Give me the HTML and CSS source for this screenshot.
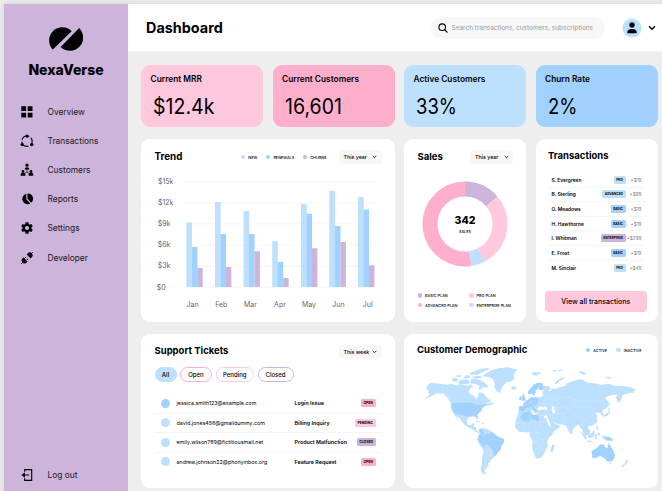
FILE: index.html
```html
<!DOCTYPE html>
<html lang="en">
<head>
<meta charset="utf-8">
<title>NexaVerse Dashboard</title>
<link rel="stylesheet" href="styles.css">
</head>
<body>
<div class="app">
  <aside class="sidebar">
    <svg class="logo" viewBox="0 0 34 24"><path d="M3.8 22.5A11.4 11.4 0 0 1 22.7 4.3Z"/><path d="M30.2 1A12 12 0 0 1 11.6 20Z"/></svg>
    <div class="brand">NexaVerse</div>
    <nav class="nav">
      <a class="nav-item"><svg class="icon" viewBox="0 0 14 14"><path d="M1.3 1.3h4.8v4.8H1.3zM7.7 1.3h4.8v4.8H7.7zM1.3 7.7h4.8v4.8H1.3zM7.7 7.7h4.8v4.8H7.7z"/></svg>Overview</a>
      <a class="nav-item"><svg class="icon" viewBox="0 0 14 14"><circle cx="7" cy="7.2" r="5.2" fill="none" stroke="#000" stroke-width="1.1" stroke-dasharray="8.9 2" stroke-dashoffset="4.5"/><circle cx="7" cy="2.1" r="1.7"/><circle cx="2.2" cy="10.6" r="1.7"/><circle cx="11.8" cy="10.6" r="1.7"/></svg>Transactions</a>
      <a class="nav-item"><svg class="icon" viewBox="0 0 14 14"><circle cx="7" cy="2.2" r="1.6"/><path d="M4.6 6.6a2.4 2.4 0 0 1 4.8 0zM.6 12.8v-1a2.3 2.3 0 0 1 4.8 0v1zM8.6 12.8v-1a2.3 2.3 0 0 1 4.8 0v1z"/><circle cx="3" cy="8.5" r="1.4"/><circle cx="11" cy="8.5" r="1.4"/><path d="M7 6v3M7 9l-2 1.4M7 9l2 1.4" stroke="#000" stroke-width=".7"/></svg>Customers</a>
      <a class="nav-item"><svg class="icon" viewBox="0 0 14 14"><path d="M6.3 1.8v5.4l4 4.3A5.3 5.3 0 1 1 6.3 1.8z"/><path d="M7.5 1.6a5.3 5.3 0 0 1 3.8 9.2L7.5 6.8z"/></svg>Reports</a>
      <a class="nav-item"><svg class="icon" viewBox="0 0 24 24"><path d="M19.6 13a8 8 0 0 0 0-2l2.3-1.8-2.3-4-2.8 1.1a8 8 0 0 0-1.8-1L14.600 2H9.400L9 5.300a8 8 0 0 0-1.800 1L4.400 5.200l-2.300 4L4.400 11a8 8 0 0 0 0 2l-2.300 1.800 2.300 4 2.800-1.100a8 8 0 0 0 1.800 1l.4 3.300h5.200l.4-3.300a8 8 0 0 0 1.800-1l2.800 1.100 2.300-4zM12 15.600a3.600 3.600 0 1 1 0-7.200 3.600 3.600 0 0 1 0 7.200z"/></svg>Settings</a>
      <a class="nav-item"><svg class="icon" viewBox="0 0 14 14"><path d="M1.300 12.700l2-2M10.700 3.300l2-2" stroke="#000" stroke-width="1"/><path d="M3.400 6.300l4.300 4.300-1 1a2.700 2.700 0 0 1-4-.2 2.700 2.700 0 0 1-.3-4zM6.700 3.500l1.200-1.200a2.700 2.700 0 0 1 4 .1 2.700 2.700 0 0 1-.1 3.700l-1.200 1.300z"/><path d="M4.600 7.500l1.600-1.600M6.500 9.400l1.600-1.600" stroke="#000" stroke-width="1"/></svg>Developer</a>
    </nav>
    <a class="nav-item logout"><svg class="icon" viewBox="0 0 14 14"><path d="M4.700 3.800V1.600h7v10.800h-7v-2.200" fill="none" stroke="#000" stroke-width="1.100"/><path d="M9.300 6.400v1.200H4.900v2.100L1.400 7l3.500-2.700v2.100z"/></svg>Log out</a>
  </aside>

  <div class="page">
    <header class="header">
      <h1>Dashboard</h1>
      <div class="search"><svg viewBox="0 0 10 10"><circle cx="4.200" cy="4.200" r="3.300"/><path d="M6.600 6.600l2.800 2.900"/></svg><span>Search transactions, customers, subscriptions</span></div>
      <svg class="avatar" viewBox="0 0 20 20"><circle cx="10" cy="10" r="9.600" fill="#bee0ff"/><circle cx="10" cy="7" r="2.700"/><path d="M5.300 15.300v-1.200c0-2 2-3.100 4.700-3.100s4.700 1.100 4.700 3.100v1.200z"/></svg>
      <svg class="account-chev" viewBox="0 0 8 6"><path d="M1 1.300l3 3 3-3"/></svg>
    </header>

    <main class="grid">
      <section class="kpi pink-light"><h3>Current MRR</h3><p>$12.4k</p></section>
      <section class="kpi pink"><h3>Current Customers</h3><p>16,601</p></section>
      <section class="kpi blue-light"><h3>Active Customers</h3><p class="percent">33%</p></section>
      <section class="kpi blue"><h3>Churn Rate</h3><p class="percent">2%</p></section>

      <section class="card trend">
        <div class="card-head">
          <h2>Trend</h2>
          <div class="legend"><span class="key k-light">NEW</span><span class="key k-blue">RENEWALS</span><span class="key k-purple">CHURNS</span></div>
          <div class="select">This year<svg viewBox="0 0 5 4"><path d="M.7.900l1.800 1.800L4.300.900"/></svg></div>
        </div>
        <svg class="chart" viewBox="141 169 253 145">
          <g class="gridlines"><path d="M186 181.700H375M186 202.800H375M186 223.900H375M186 245.200H375M186 266.300H375M186 287.400H375"/></g>
          <g class="axis">
            <text x="158" y="183.500">$15k</text><text x="158" y="204.700">$12k</text><text x="157.700" y="226">$9k</text><text x="157.700" y="247.200">$6k</text><text x="157.700" y="268.400">$3k</text><text x="156.700" y="289.500">$0</text>
            <g text-anchor="middle"><text x="192.500" y="307">Jan</text><text x="221.300" y="307">Feb</text><text x="250.500" y="307">Mar</text><text x="280" y="307">Apr</text><text x="309" y="307">May</text><text x="338.500" y="307">Jun</text><text x="367.700" y="307">Jul</text></g>
          </g>
          <path fill="#bee0ff" d="M186.300 222.400h5.700V287h-5.700zM215 202h5.700v85H215zM243.500 211h5.700v76h-5.700zM272.200 241.300h5.700V287h-5.700zM301 204h5.700v83H301zM329.300 191h5.700v96h-5.700zM358 197h5.700v90H358z"/>
          <path fill="#a1d1ff" d="M191.900 247h5.500v40h-5.500zM220.500 234h5.500v53h-5.500zM249 234h5.500v53H249zM277.700 262h5.500v25h-5.500zM306.500 213.700h5.500V287h-5.500zM335 226h5.500v61H335zM363.500 209.400h5.500V287h-5.500z"/>
          <path fill="#cdb4db" d="M197.300 268h5.400v19h-5.400zM226 267h5.400v20H226zM254.500 251.200h5.400V287h-5.400zM283.200 278h5.400v9h-5.400zM312 248.200h5.400V287H312zM340.500 242h5.400v45h-5.400zM369 265.300h5.400V287H369z"/>
        </svg>
      </section>

      <section class="card sales">
        <div class="card-head"><h2>Sales</h2><div class="select">This year<svg viewBox="0 0 5 4"><path d="M.7.900l1.800 1.800L4.300.900"/></svg></div></div>
        <svg class="donut" viewBox="0 0 86 86">
          <g transform="rotate(-90 43 43)" fill="none" stroke-width="15">
            <circle cx="43" cy="43" r="35" pathLength="360" stroke="#ffafcc" stroke-dasharray="189 171" stroke-dashoffset="-171"/>
            <circle cx="43" cy="43" r="35" pathLength="360" stroke="#cdb4db" stroke-dasharray="50 310"/>
            <circle cx="43" cy="43" r="35" pathLength="360" stroke="#ffc8dd" stroke-dasharray="102 258" stroke-dashoffset="-50"/>
            <circle cx="43" cy="43" r="35" pathLength="360" stroke="#bee0ff" stroke-dasharray="19 341" stroke-dashoffset="-152"/>
          </g>
          <text class="total" x="43" y="43.100" text-anchor="middle">342</text>
          <text class="unit" x="43" y="51.600" text-anchor="middle">SALES</text>
        </svg>
        <div class="plans"><span class="key k-purple">BASIC PLAN</span><span class="key k-pl">PRO PLAN</span><span class="key k-pink">ADVANCED PLAN</span><span class="key k-light">ENTERPRISE PLAN</span></div>
      </section>

      <section class="card tx">
        <h2>Transactions</h2>
        <ul>
          <li><b>S. Evergreen</b><i class="tag blue-light">PRO</i><em>+$19</em></li>
          <li><b>B. Sterling</b><i class="tag blue-light">ADVANCED</i><em>+$99</em></li>
          <li><b>O. Meadows</b><i class="tag blue">BASIC</i><em>+$19</em></li>
          <li><b>H. Hawthorne</b><i class="tag blue">BASIC</i><em>+$19</em></li>
          <li><b>I. Whitman</b><i class="tag purple">ENTERPRISE</i><em>+$299</em></li>
          <li><b>E. Frost</b><i class="tag blue">BASIC</i><em>+$19</em></li>
          <li><b>M. Sinclair</b><i class="tag blue-light">PRO</i><em>+$49</em></li>
        </ul>
        <div class="view-all">View all transactions</div>
      </section>

      <section class="card support">
        <div class="card-head"><h2>Support Tickets</h2><div class="select">This week<svg viewBox="0 0 5 4"><path d="M.7.900l1.800 1.800L4.300.900"/></svg></div></div>
        <div class="pills"><span class="pill p-all">All</span><span class="pill p-open">Open</span><span class="pill p-pending">Pending</span><span class="pill p-closed">Closed</span></div>
        <ul>
          <li><span class="dot blue"></span><span class="mail">jessica.smith123@example.com</span><b>Login Issue</b><i class="tag pink">OPEN</i></li>
          <li><span class="dot blue-light"></span><span class="mail">david.jones456@gmaildummy.com</span><b>Billing Inquiry</b><i class="tag pink-light">PENDING</i></li>
          <li><span class="dot blue-light"></span><span class="mail">emily.wilson789@fictitiousmail.net</span><b>Product Malfunction</b><i class="tag purple">CLOSED</i></li>
          <li><span class="dot blue-light"></span><span class="mail">andrew.johnson22@phonyinbox.org</span><b>Feature Request</b><i class="tag pink">OPEN</i></li>
        </ul>
      </section>

      <section class="card demo">
        <div class="card-head"><h2>Customer Demographic</h2><div class="legend"><span class="key k-blue">ACTIVE</span><span class="key k-light">INACTIVE</span></div></div>
        <svg class="map" viewBox="75 115 640 330">
          <g fill="#bee0ff">
            <path d="M80 178l5-8 8-5 11 2 24 2 14 3 10-4 14 5 14-3 18 3 10 1 5-4 7 7-8 7-6 8 4 7 12 5 8 10 4-6 1-12 8-2 9 4 7 9 8 8 8 8-10 1-5 5 12-4 10 0-2 4-11 4-13 2-5 4-6 5-1 6-7 6-7 8 4 10-3 1-6-8-10 0-10 3-4 6 0 8 4 8 8 0 5-5 7 1-4 6-2 3 9 2 0 8 8 5 7-2-7 6-10-4-10-8-12-6-10-6-8-10-8-10-9-8 4 12 4 7-5-5-5-11-5-8-6-8-4-10 0-14-6-10-5-9-11-9-8-2-12 0-10 5-12 7-14 3 12-8 4-6-7-3 5-6-9-4z"/>
            <path d="M154 157l8-7 11 2 1 8-10 3zM174 164l8-8 16-1 10 4-1 9-14 2-14-1zM165 146l12-5 9 3-8 5zM190 150l8-8 14 2-4 7-9 2zM206 138l12-6 10 4-8 6zM222 132l18-8 22-3 8 3-22 9-14 8-14 0zM214 148l18-4 14 3-4 5-18 1zM210 164l4-10 14 0 14 4 13 7 10 9-5 7-12-3-2 8-12-2 6-9-14-7-14 0zM212 192l8-6 8 6-4 6-8-1z"/>
            <path d="M248 146l8-8 18-10 20-6 30-3 29 7-8 7-4 11 2 10-12 8-10 2-10 9-6 8-5 14-9-3-8-14 1-12-6-13-12-5z"/>
            <path d="M333 180l5-4 10 2 2 4-8 5-7-2zM224 279l10 0 10 6-9-1zM244 287l7 0 4 3-10 0z"/>
            <path d="M236 306l8-4 12 0 10 4 12 6 6 8 12 8 16 6 0 10-8 10-2 12-8 8-8 10-6 6-8 6 0 8-8 2 2 6-6 8-6 8 0 6 6 4-10 2-6-6-2-10 4-16 0-16 4-16-2-14-10-12-7-14 3-10 4-8z"/>
            <path d="M360 236l12 0-2-10 8-6 8-6 10-4 14 0 12-2 8-6-4-8 6-8-10-2-4-8 12-2 18 2 4 8-8 4 8 2 4-8 10 2 14-6 14-2 8-10 16-5 20-6 12 2 12 8 24 2 16 4 26-2 18 6 24 0 22 4 17 7-10 5 6 4-14 0-10 3-14 5-2 10-8 12-6-6 2-14 8-8-18 5-18 2-10 8 8 8 6 9-9 11-11 7-2 6 5 10-6 2-5-9-8-1-9 2 9 6-4 6 4 10-8 10-10 5-8 0-4 6 8 10-2 10-10 4-6-8-2-8 4 12 7 14-8-6-5-12-2-10-6-6-4-10-8 4-10 9-2 12-6 6-6-12-6-14-10-4-12-2-12-4-8-6 8 9 14 5-1 7-15 10-12 3-7-13-9-18 0-8 4-8-14-2-12-2 2-6-10 2-7-10-4-2 4 9-6 7-8-12-8 1-8 7-6 4-8-4z"/>
            <path d="M350 268l8-12 8-4 22-2 4 8 12 4 12-2 14 4 4 8 6 14 8 17 16-1-4 14-14 16-4 12 2 12-8 12-4 12-12 12-12 0-6-14-6-18 2-16-6-14-4-16-16 0-14-2-12-12 0-16zM459 349l5 5-6 20-6-2 1-12z"/>
            <path d="M393 137l12-4 8 2 8-3 2 5-14 7-9-1zM456 130l10-4 6 3-10 3zM471 127l14-2 5 2-13 4zM463 170l6-10 12-8 15-4-6 6-12 6-8 10zM534 132l13-1 12 6-7 4zM614 149l10-2 14 3-12 3zM647 213l6-16 7 2-6 14zM610 264l10-7 6-4 0-16 4 6 0 12-8 9-12 5zM624 222l3 1 2 12-4-2zM585 284l3-5 2 6-3 4zM586 297l6-2 4 14-7-6zM592 316l8 0 2 9-8-4zM540 310l7 5 11 14 4 7-8-4-8-12zM558 338l14 1 10 4-14 0zM565 322l10-6 6-8 4 5-4 14-8 4-8-2zM584 320l10 0-5 5 3 9-6 1-2-9zM606 322l8 4 16 2 8 8 4 7-12-5-9 2-10-7-6-5zM667 413l8-7 4-9 3-1 4 5-8 7-8 9-6 4zM629 405l6 0-2 7zM514 308l4 5-2 4-3-3zM664 362l5 3 0 4z"/>
          </g>
          <g fill="#a1d1ff">
            <path d="M156 224h56l10 4 10 4 14 0 8-4 2 5-10 7-1 8-7 6-7 8 4 10-3 0-6-8-10 0-10 2-6 4-6-6-6 0-14-2-8-3-6-8-4-12z"/>
            <path d="M237 306l9-3 2 8 8 9 10-2 10-4 8 6 12 8 16 6 0 10-8 10-2 12-8 8-8 12-8-6 2-8-6-10-8-10-10-2-2 12-7-6-9-15-3-6 3-9 4-10z"/>
            <path d="M384 200l0-10 8-8 10-12 12-5 14 1 0 5-10 3-4 10-8 4 2 6-6 10-6-6zM418 180l2-8 8-1 4 13-8 4-8-2zM358 235l12 0 0-8 8-6 8-6 8-6 20 0 1 15-9 8-2 8-6 0-4-3-8 3-8 2-8 8-10 1-4-4zM396 234l8 8 5 6-3 4-8-8zM366 214l2-14 4 0 4 14 3 4-13 2zM357 214l4-8 5 2-2 8-6 1zM361 266l13-12 14-4 4 8 0 22-16 4-16-12zM394 259l10 3 12-2 2 22-8-1-16-7z"/>
            <path d="M575 370l14-8 12-12 12 1 1 7 8 4 4-16 6 9 8 14 5 13-4 14-8 6-12-1-7-9-14-7-14 7-9-1zM610 325l8 4 12 0 8 8-10 2-12-7z"/>
          </g>
          <g fill="#fff"><path d="M412 247l4-10 7-2 5 4 8-3 7 6-3 6-12-3-10 3zM456 237l5-3 3 5-2 5 5 8-4 6-6-2-2-10zM436 262l2-3 10 20 6 20-7-5-8-20zM211 192l-2-8 6-5 14 5 6 8-2 12-5 4-8-6-10-3zM407 202l4-12 5-7 0 7-3 8 10-2-7 5-6 7z"/></g>
          <path class="borders" d="M128 169v27l12 4 16 24h56M172 261l14 2 8 1 8 8M254 304l2 16M246 322l10 0M250 356l12 0 10 12 0 20M262 362l-8 60M360 270l16 12 18-6 24 6M376 284l-4 28M392 284l-6 30M418 262v28l-8 20M420 282h20M436 264h-18M396 314h20l12 8 18-8M410 310l4 20-14 14M414 330l14 4 14-8M398 344l18 2 4 20 18-4M404 364h14l-2 18M428 334l-2 26M436 318l4 24M348 284h18M356 300l18-6M428 170l2 30 8 12-10 14 14 14M414 210l4 18 20-2M438 212l20 6-2 16M456 222l16-8 20-4 18-2 18 10 20 4 22-4 16 2 18-2 10 12M528 218l-14 10 8 12-14 6-18-8-24 4M522 226l18 12 24 2 14-10M466 240l6 14 22 4 14-12M508 246l4 14 24 12 10-4 8 10 16 6M472 254l-2 18M494 258l-4 22M552 278l-4 18M440 256l20 14M590 246l-6-8M376 236l18-14 10 20M430 184l-4 26"/>
        </svg>
      </section>
    </main>
  </div>
</div>
</body>
</html>
```

FILE: styles.css
```css
* { box-sizing: border-box; margin: 0; padding: 0; }
body { width: 662px; height: 491px; overflow: hidden; background: #ebebeb; font-family: Inter, "Liberation Sans", sans-serif; color: #000; padding: 4px 0 0 4px; }
h1, h2, h3, p, span, b, i, em, a, div { white-space: nowrap; }
i, em { font-style: normal; }
ul { list-style: none; }
svg { display: block; flex: none; }
.app { display: flex; width: 658px; height: 500px; background: #eee; box-shadow: 0 0 5px rgba(0,0,0,.1); }
.sidebar { width: 124px; height: 487px; background: #cdb4db; display: flex; flex-direction: column; flex: none; }
.logo { width: 34px; height: 24px; margin: 23px 0 0 45px; }
.brand { font-size: 14px; font-weight: 800; line-height: 18px; margin-top: 10px; text-align: center; }
.nav { margin-top: 18px; }
.nav-item { display: flex; align-items: center; height: 29.200px; padding-left: 16px; gap: 13.500px; font-size: 8.400px; color: #1d1722; }
.icon { width: 14px; height: 14px; fill: #000; }
.logout { margin-top: auto; margin-bottom: 1px; }
.page { flex: 1; min-width: 0; }
.header { height: 47px; background: #fff; display: flex; align-items: center; padding-left: 18px; }
h1 { font-size: 14.400px; font-weight: 700; width: 285px; }
.search { width: 174px; height: 22px; border-radius: 11px; background: #f7f7f7; display: flex; align-items: center; padding-left: 6.500px; gap: 4px; font-size: 6.480px; color: #999; }
.search svg { width: 10px; height: 10px; fill: none; stroke: #000; stroke-width: 1.100; }
.avatar { width: 20px; height: 20px; margin-left: 17px; }
.account-chev { width: 8px; height: 6px; margin-left: 5.500px; fill: none; stroke: #000; stroke-width: 1.400; }
.grid { display: grid; grid-template-columns: repeat(4, 122px); grid-template-rows: 62px 183px 154px; gap: 12px 9.500px; padding: 14px 0 0 13px; }
.kpi { border-radius: 9px; padding: 9px 0 0 9.500px; }
.kpi h3 { font-size: 8.350px; font-weight: 600; line-height: 11px; }
.kpi p { font-size: 21px; line-height: 26px; margin: 9px 0 0 2.500px; transform: scaleX(.93); transform-origin: left; }
.kpi .percent { transform: scaleX(.88); }
.pink-light { background: #ffc8dd; }
.pink { background: #ffafcc; }
.blue-light { background: #bee0ff; }
.blue { background: #a1d1ff; }
.purple { background: #cdb4db; }
.card { background: #fff; border-radius: 9px; }
.trend, .support, .demo { grid-column: span 2; }
.card-head { display: flex; align-items: center; padding: 10px 13px 0 13.500px; height: 26px; }
h2 { font-size: 9.500px; font-weight: 700; line-height: 14px; }
.card-head h2 { margin-top: -1px; }
.select { width: 43px; height: 14px; background: #f7f7f7; border-radius: 4px; display: flex; align-items: center; justify-content: space-between; padding: 0 4.500px 0 5px; font-size: 5.300px; font-weight: 500; margin-left: auto; }
.select svg { width: 5px; height: 4px; fill: none; stroke: #000; stroke-width: .8; }
.legend { display: flex; margin-left: auto; gap: 9px; }
.key { display: flex; align-items: center; gap: 3px; font-size: 3.800px; font-weight: 500; line-height: 5px; }
.key::before { content: ""; width: 4.600px; height: 4.600px; border-radius: 50%; background: currentColor; flex: none; }
.k-light::before { background: #bee0ff; }
.k-blue::before { background: #a1d1ff; }
.k-purple::before { background: #cdb4db; }
.k-pink::before { background: #ffafcc; }
.k-pl::before { background: #ffc8dd; }
.trend .legend + .select { margin-left: 12px; }
.trend .legend { gap: 8.500px; }
.trend h2 { font-size: 9.800px; }
.chart { width: 253px; height: 145px; margin-top: 4px; }
.gridlines { stroke: #f6f6f6; stroke-width: 1; }
.axis { font-size: 7px; fill: #666; }
.donut { width: 86px; height: 86px; margin: 16px 0 0 18.300px; }
.total { font-size: 10.600px; font-weight: 800; }
.unit { font-size: 3.800px; font-weight: 500; }
.plans { display: grid; grid-template-columns: 51.500px auto; row-gap: 4.500px; margin: 26px 0 0 13.500px; justify-content: start; }
.tx h2 { padding: 9.500px 0 0 12.500px; height: 34px; }
.tx ul { margin: 0 14px 0 12px; }
.tx li { display: flex; align-items: center; height: 14.600px; padding: 0 2px 0 4px; border-bottom: 1px solid #f5f5f5; font-size: 4.900px; }
.tx li:last-child, .support li:last-child { border-bottom: 0; }
.tx b { flex: 1; font-weight: 600; }
.tx em { width: 16px; text-align: right; color: #777; font-size: 4.700px; }
.tag { height: 8px; line-height: 8px; border-radius: 1.500px; padding: 0 2.600px; font-size: 3.200px; font-weight: 700; }
.view-all { margin: 15.500px 11px 0 9.500px; height: 21.500px; line-height: 21.500px; border-radius: 4px; background: #ffc8dd; text-align: center; font-size: 7px; font-weight: 500; }
.support .card-head { height: 26px; }
.support .card-head h2 { margin-top: -2.500px; }
.pills { display: flex; margin: 6.500px 0 0 13.500px; gap: 3.500px; font-size: 6px; font-weight: 500; }
.pill { height: 15.500px; border-radius: 8px; display: flex; align-items: center; justify-content: center; border: 1.200px solid; }
.p-all { width: 22px; background: #bee0ff; border-color: #bee0ff; }
.p-open { width: 32px; border-color: #ffafcc; }
.p-pending { width: 38.500px; border-color: #ffc8dd; }
.p-closed { width: 36px; border-color: #cdb4db; }
.support ul { margin: 12px 13px 0; }
.support li { display: flex; align-items: center; height: 19.500px; padding: 0 6px 0 7px; border-bottom: 1px solid #f5f5f5; font-size: 5.330px; }
.support li:last-child { height: 18.500px; }
.support .tag { font-size: 3.400px; }
.dot { width: 9px; height: 9px; border-radius: 50%; margin-right: 6.500px; }
.mail { width: 118px; }
.support b { font-weight: 600; flex: 1; }
.demo .card-head { padding: 8px 16px 0 13px; height: 24px; }
.demo .card-head h2 { margin-top: 0; }
.map { width: 213.300px; height: 110px; margin: 8.300px 0 0 21px; }
.borders { fill: none; stroke: #d8edff; stroke-width: 1.300; }
```
